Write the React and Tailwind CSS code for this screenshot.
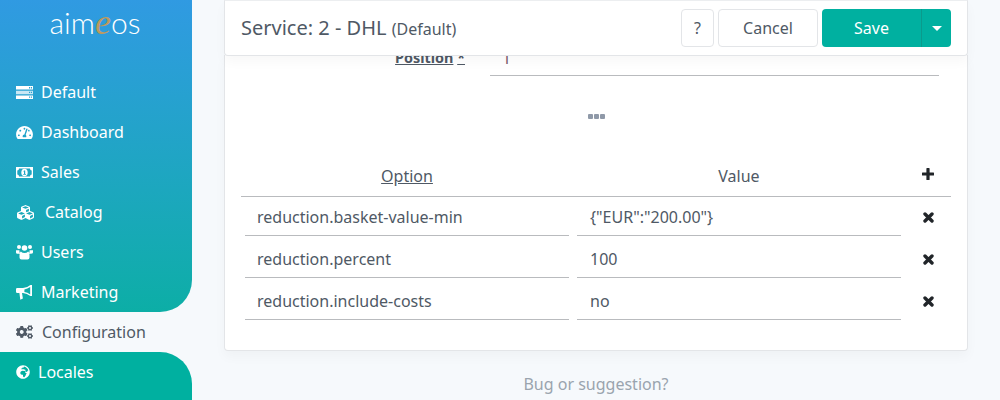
import { FaTachometerAlt, FaCubes, FaCogs, FaGlobeAfrica } from 'react-icons/fa';

function ServerIcon() {
  return (
    <svg viewBox="0 0 17 13" className="w-[17px] h-[13px]" fill="currentColor">
      <path fillRule="evenodd" d="M0 0h17v3.6H0zM13 1v1.4h1.2V1zM15 1v1.4h1V1z" />
      <path fillOpacity="0.75" fillRule="evenodd" d="M0 4.7h17v3.6H0zM13 5.7v1.4h1.2V5.7zM15 5.7v1.4h1V5.7z" />
      <path fillRule="evenodd" d="M0 9.4h17V13H0zM13 10.4v1.4h1.2v-1.4zM15 10.4v1.4h1v-1.4z" />
    </svg>
  );
}

function MoneyIcon() {
  return (
    <svg viewBox="0 0 17 11" className="w-[17px] h-[11px]" fill="currentColor">
      <path fillRule="evenodd" d="M0 0h17v11H0zM3 1.5Q3 3.3 1.3 3.5v4Q3 7.7 3 9.5h11q0-1.8 1.7-2V3.5Q14 3.3 14 1.5z" />
      <ellipse cx="8.5" cy="5.5" rx="3.2" ry="3.8" />
      <path d="M8 3.4h1.2v3.6h.8v.8H7.2V7H8V4.4l-.8.3z" fill="#1ea4c8" />
    </svg>
  );
}

function UsersIcon() {
  return (
    <svg viewBox="0 0 17 16" className="w-[17px] h-[16px]" fill="currentColor">
      <circle cx="3" cy="3" r="2" />
      <circle cx="14" cy="3" r="2" />
      <circle cx="8.5" cy="4" r="2.8" />
      <path d="M0 6.2h3.4q-.3 2 1 3.6H1.4Q0 9.8 0 8.5zM17 6.2h-3.4q.3 2-1 3.6h2Q17 9.8 17 8.5z" />
      <path d="M4.8 7.6q1.6 1.5 3.7 1.5t3.7-1.5q1.3.6 1.3 3.6v2.3q0 2-2 2h-6q-2 0-2-2v-2.3q0-3 1.3-3.6z" />
    </svg>
  );
}

function BullhornIcon() {
  return (
    <svg viewBox="0 0 16 15" className="w-[16px] h-[15px]" fill="currentColor">
      <path fillRule="evenodd" d="M14.4 0H16v11h-1.6Q11 8.3 7 8H6l.9 5.4-2.6 1.3L3.4 8H1.2Q0 8 0 6.8V4.2Q0 3 1.2 3H7q4 0 7.4-3zM14.2 2Q11.5 4 8.4 4.4v2.7q3.1.3 5.8 2.4z" />
    </svg>
  );
}

function PlusIcon() {
  return (
    <svg viewBox="0 0 12 12" className="w-[12px] h-[12px]" fill="currentColor">
      <path d="M4.4 0.5Q4.4 0 5 0h2q.6 0 .6.5v3.9h3.9q.5 0 .5.6v2q0 .6-.5.6H7.6v3.9q0 .5-.6.5H5q-.6 0-.6-.5V7.6H.5Q0 7.6 0 7V5q0-.6.5-.6h3.9z" />
    </svg>
  );
}

function CloseIcon() {
  return (
    <svg viewBox="0 0 11 11" className="w-[11px] h-[11px]" stroke="currentColor" strokeWidth="3.4" strokeLinecap="round">
      <path d="M2 2l7 7M9 2l-7 7" />
    </svg>
  );
}

function DotsIcon() {
  return (
    <div className="flex gap-[1px]">
      <div className="w-[5px] h-[5px] bg-[#8f99a8] rounded-[1px]" />
      <div className="w-[5px] h-[5px] bg-[#8f99a8] rounded-[1px]" />
      <div className="w-[5px] h-[5px] bg-[#8f99a8] rounded-[1px]" />
    </div>
  );
}

const NAV_TOP = [
  { label: 'Default', icon: <ServerIcon />, iconBox: 'w-[17px]', gap: 'gap-2' },
  { label: 'Dashboard', icon: <FaTachometerAlt className="w-[17px] h-[15px]" />, iconBox: 'w-[17px]', gap: 'gap-2' },
  { label: 'Sales', icon: <MoneyIcon />, iconBox: 'w-[17px]', gap: 'gap-2' },
  { label: 'Catalog', icon: <FaCubes className="w-[19px] h-[17px]" />, iconBox: 'w-[19px]', gap: 'gap-[10px]' },
  { label: 'Users', icon: <UsersIcon />, iconBox: 'w-[17px]', gap: 'gap-2' },
  { label: 'Marketing', icon: <BullhornIcon />, iconBox: 'w-[16px]', gap: 'gap-[9px]' },
];

const ROWS = [
  { option: 'reduction.basket-value-min', value: '{"EUR":"200.00"}' },
  { option: 'reduction.percent', value: '100' },
  { option: 'reduction.include-costs', value: 'no' },
];

function Sidebar() {
  return (
    <aside className="w-[192px] h-[400px] shrink-0 flex flex-col text-white text-[16px]">
      <div className="rounded-br-[32px] bg-gradient-to-b from-[#309ae2] to-[#0caea6]">
        <div className="h-[72px] flex justify-center pt-[2px] pr-[2px] text-[30px] leading-[40px] font-light font-['Lato',sans-serif]">
          <span>aim<span className="text-[#bd9a5f] italic text-[36px] font-['Liberation_Serif',serif]">e</span>os</span>
        </div>
        {NAV_TOP.map((item) => (
          <div key={item.label} className={`h-[40px] flex items-center pl-4 ${item.gap}`}>
            <div className={`${item.iconBox} flex justify-center`}>{item.icon}</div>
            <span>{item.label}</span>
          </div>
        ))}
      </div>
      <div className="h-[40px] flex items-center gap-[9px] pl-4 text-[#4f5965]">
        <FaCogs className="w-[17px] h-[16px]" />
        <span>Configuration</span>
      </div>
      <div className="flex-1 rounded-tr-[32px] bg-[#00b0a0] pl-4 pt-[8px] flex items-start gap-2">
        <FaGlobeAfrica className="w-[14px] h-[14px] mt-[5px]" />
        <span>Locales</span>
      </div>
    </aside>
  );
}

function Header() {
  return (
    <div className="relative z-10 h-[56px] flex items-center justify-between bg-white border border-[#e3e5e8] border-t-[#eceef0] rounded-b-[4px] pl-[16px] pr-[16px] shadow-[0_6px_12px_rgba(0,0,0,0.03)]">
      <div className="text-[#4f5965] text-[20px]">
        Service: 2 - DHL <span className="text-[16px]">(Default)</span>
      </div>
      <div className="flex items-center gap-[4px]">
        <div className="w-[33px] h-[38px] flex items-center justify-center border border-[#e3e5e8] rounded-[4px] text-[#4f5965]">?</div>
        <div className="w-[100px] h-[38px] flex items-center justify-center border border-[#e3e5e8] rounded-[4px] text-[#4f5965]">Cancel</div>
        <div className="flex h-[38px] w-[129px] rounded-[4px] bg-[#00b0a0] text-white">
          <div className="w-[100px] flex items-center justify-center border-r border-[#0a9a8c]">Save</div>
          <div className="flex-1 flex items-center justify-center">
            <div className="w-0 h-0 border-x-[5px] border-x-transparent border-t-[5px] border-t-white" />
          </div>
        </div>
      </div>
    </div>
  );
}

function OptionTable() {
  return (
    <div className="pl-[16px] pr-[16px]">
      <div className="h-[42px] flex items-center text-[16px] text-[#4f5965] border-b border-[#b9bbbe]">
        <div className="w-[332px] text-center underline">Option</div>
        <div className="w-[332px] text-center">Value</div>
        <div className="flex-1 flex justify-center text-[#212529] pb-[4px]"><PlusIcon /></div>
      </div>
      {ROWS.map((row) => (
        <div key={row.option} className="h-[42px] flex items-start pl-[4px] text-[16px] text-[#4f5965]">
          <div className="w-[324px] h-[39px] flex items-center pl-[12px] pt-[1px] border-b border-[#b9bbbe]">{row.option}</div>
          <div className="w-[324px] ml-[8px] h-[39px] flex items-center pl-[13px] pt-[1px] border-b border-[#b9bbbe]">{row.value}</div>
          <div className="flex-1 h-[39px] flex items-center justify-center text-[#212529] pl-[4px] pt-[1px]"><CloseIcon /></div>
        </div>
      ))}
    </div>
  );
}

export default function App() {
  return (
    <div className="w-[1000px] h-[400px] overflow-hidden flex bg-[#f6f9fc] font-['Noto_Sans',sans-serif]">
      <Sidebar />
      <main className="w-[744px] ml-[32px] flex flex-col">
        <Header />
        <div className="h-[296px] -mt-[1px] bg-white border border-[#e3e5e8] border-t-0 rounded-b-[4px] shadow-[0_6px_12px_rgba(0,0,0,0.03)]">
          <div className="-mt-[9px] h-[30px] flex text-[#4f5965] text-[14.4px]">
            <div className="w-[240px] text-right font-bold leading-[23px]"><span className="underline">Position</span> <span className="underline">*</span></div>
            <div className="w-[449px] ml-[25px] h-[30px] border-b border-[#b9bbbe] pl-[12px] text-[16px] leading-[24px] text-[#7b5a6b]">1</div>
          </div>
          <div className="h-[79px] pt-[38px] flex justify-center">
            <DotsIcon />
          </div>
          <OptionTable />
        </div>
        <div className="text-center text-[#9aa4ae] text-[16px] mt-[21px]">Bug or suggestion?</div>
      </main>
    </div>
  );
}
